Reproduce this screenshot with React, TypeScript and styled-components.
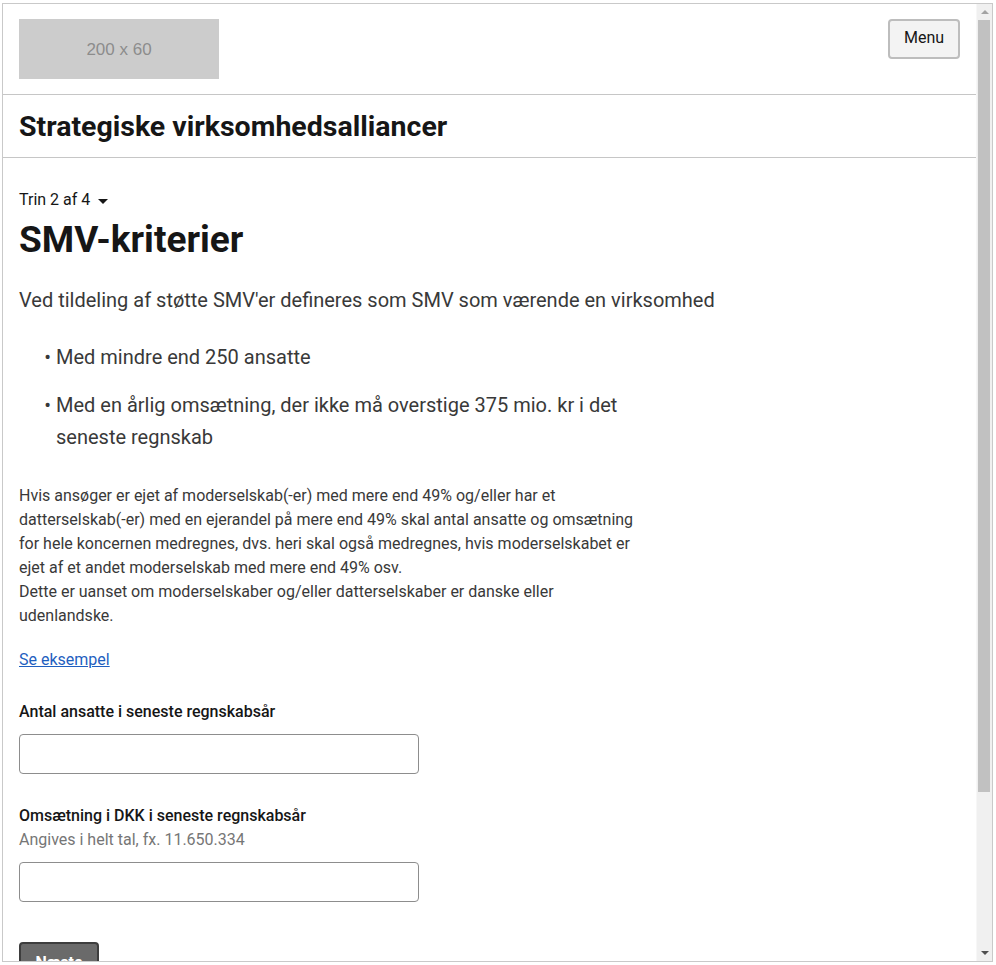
import styled, { createGlobalStyle } from "styled-components";

const GlobalStyle = createGlobalStyle`
  html, body {
    margin: 0;
    padding: 0;
    background: #fff;
  }
  body {
    font-family: Roboto, "Noto Sans", Arial, sans-serif;
    font-size: 16px;
    color: #161616;
  }
`;

export default function App() {
  return (
    <>
      <GlobalStyle />
      <SFrame>
        <SViewport>
          <SHeader>
            <SLogo>200 x 60</SLogo>
            <SMenuButton type="button">Menu</SMenuButton>
          </SHeader>
          <STitleBar>
            <STitle>Strategiske virksomhedsalliancer</STitle>
          </STitleBar>
          <SMain>
            <SStep>
              Trin 2 af 4 <SCaret />
            </SStep>
            <SHeading>SMV-kriterier</SHeading>
            <SLead>
              Ved tildeling af støtte SMV'er defineres som SMV som værende en
              virksomhed
            </SLead>
            <SList>
              <li>Med mindre end 250 ansatte</li>
              <li>
                Med en årlig omsætning, der ikke må overstige 375 mio. kr i det
                seneste regnskab
              </li>
            </SList>
            <SText>
              Hvis ansøger er ejet af moderselskab(-er) med mere end 49%
              og/eller har et datterselskab(-er) med en ejerandel på mere end
              49% skal antal ansatte og omsætning for hele koncernen medregnes,
              dvs. heri skal også medregnes, hvis moderselskabet er ejet af et
              andet moderselskab med mere end 49% osv.
              <br />
              Dette er uanset om moderselskaber og/eller datterselskaber er
              danske eller udenlandske.
            </SText>
            <SLink href="#">Se eksempel</SLink>

            <SField>
              <SLabel htmlFor="ansatte">Antal ansatte i seneste regnskabsår</SLabel>
              <SInput id="ansatte" type="text" />
            </SField>
            <SField>
              <SLabel htmlFor="omsaetning">
                Omsætning i DKK i seneste regnskabsår
              </SLabel>
              <SHint>Angives i helt tal, fx. 11.650.334</SHint>
              <SInput id="omsaetning" type="text" />
            </SField>
            <SNextButton type="button">Næste</SNextButton>
          </SMain>
        </SViewport>
        <SScrollbar aria-hidden>
          <SArrow $dir="up" />
          <STrack>
            <SThumb />
          </STrack>
          <SArrow $dir="down" />
        </SScrollbar>
      </SFrame>
    </>
  );
}

const SFrame = styled.div`
  box-sizing: border-box;
  display: flex;
  margin: 3px 0 0 2px;
  width: 991px;
  height: 959px;
  border: 1px solid #c9c9c9;
  overflow: hidden;
`;

const SViewport = styled.div`
  flex: 1;
  min-width: 0;
  overflow: hidden;
`;

const SScrollbar = styled.div`
  width: 15px;
  flex: none;
  display: flex;
  flex-direction: column;
  background: #f0f0f0;
  border-left: 1px solid #f7f7f7;
`;

const SArrow = styled.div<{ $dir: "up" | "down" }>`
  height: 16px;
  flex: none;
  display: flex;
  align-items: center;
  justify-content: center;

  &::before {
    content: "";
    border-left: 4px solid transparent;
    border-right: 4px solid transparent;
    ${(p) =>
      p.$dir === "up"
        ? "border-bottom: 4px solid #a3a3a3;"
        : "border-top: 4px solid #505050;"}
  }
`;

const STrack = styled.div`
  flex: 1;
  padding: 0 2px 0 1px;
`;

const SThumb = styled.div`
  height: 772px;
  background: #c1c1c1;
`;

const SHeader = styled.header`
  display: flex;
  justify-content: space-between;
  align-items: flex-start;
  padding: 15px 16px;
  border-bottom: 1px solid #c6c6c6;
`;

const SLogo = styled.div`
  width: 200px;
  height: 60px;
  background: #cccccc;
  color: #8c8c8c;
  font-family: "Liberation Sans", Arial, sans-serif;
  font-size: 17px;
  display: flex;
  align-items: center;
  justify-content: center;
  padding-top: 2px;
  box-sizing: border-box;
`;

const SMenuButton = styled.button`
  width: 72px;
  height: 40px;
  background: #f3f3f3;
  border: 2px solid #bdbdbd;
  border-radius: 4px;
  font-family: Roboto, "Noto Sans", Arial, sans-serif;
  font-size: 16px;
  color: #161616;
  padding: 0 0 4px;
`;

const STitleBar = styled.div`
  height: 62px;
  display: flex;
  align-items: center;
  padding: 0 16px;
  border-bottom: 1px solid #c6c6c6;
`;

const STitle = styled.h1`
  margin: 0;
  font-size: 28.5px;
  font-weight: 700;
  color: #161616;
`;

const SMain = styled.main`
  padding: 30px 16px 170px;
  color: #393939;
`;

const SStep = styled.div`
  font-size: 16px;
  line-height: 24px;
  color: #161616;
  display: flex;
  align-items: center;
  gap: 4px;
`;

const SCaret = styled.span`
  display: inline-block;
  margin-left: 4px;
  margin-top: 2px;
  border-left: 5px solid transparent;
  border-right: 5px solid transparent;
  border-top: 5px solid #161616;
`;

const SHeading = styled.h2`
  margin: 6px 0 0;
  font-size: 37px;
  line-height: 44px;
  font-weight: 700;
  color: #161616;
`;

const SLead = styled.p`
  margin: 22px 0 0;
  font-size: 20px;
  line-height: 32px;
  color: #393939;
`;

const SList = styled.ul`
  margin: 25px 0 0;
  padding: 0 0 0 37px;
  max-width: 603px;
  font-size: 20px;
  line-height: 32px;
  color: #393939;
  list-style-type: "• ";

  li + li {
    margin-top: 16px;
  }
`;

const SText = styled.p`
  margin: 31px 0 0;
  max-width: 622px;
  font-size: 16px;
  line-height: 24px;
  color: #393939;
`;

const SLink = styled.a`
  display: inline-block;
  margin-top: 20px;
  font-size: 16px;
  line-height: 24px;
  color: #1f5fbf;
  text-decoration: underline;
`;

const SField = styled.div`
  display: flex;
  flex-direction: column;
  align-items: flex-start;
  margin-top: 28px;

  & + & {
    margin-top: 30px;
  }
`;

const SLabel = styled.label`
  font-size: 16px;
  line-height: 24px;
  font-weight: 500;
  color: #161616;
`;

const SHint = styled.span`
  font-size: 16px;
  line-height: 24px;
  color: #767676;
`;

const SInput = styled.input`
  box-sizing: border-box;
  width: 400px;
  height: 40px;
  margin-top: 10px;
  border: 1px solid #8d8d8d;
  border-radius: 4px;
  font-size: 16px;
  padding: 0 10px;
`;

const SNextButton = styled.button`
  display: block;
  margin-top: 40px;
  width: 80px;
  height: 40px;
  background: #6a6a6a;
  border: 2px solid #3d3d3d;
  border-radius: 4px;
  color: #fff;
  font-family: Roboto, "Noto Sans", Arial, sans-serif;
  font-size: 16px;
  font-weight: 700;
`;
